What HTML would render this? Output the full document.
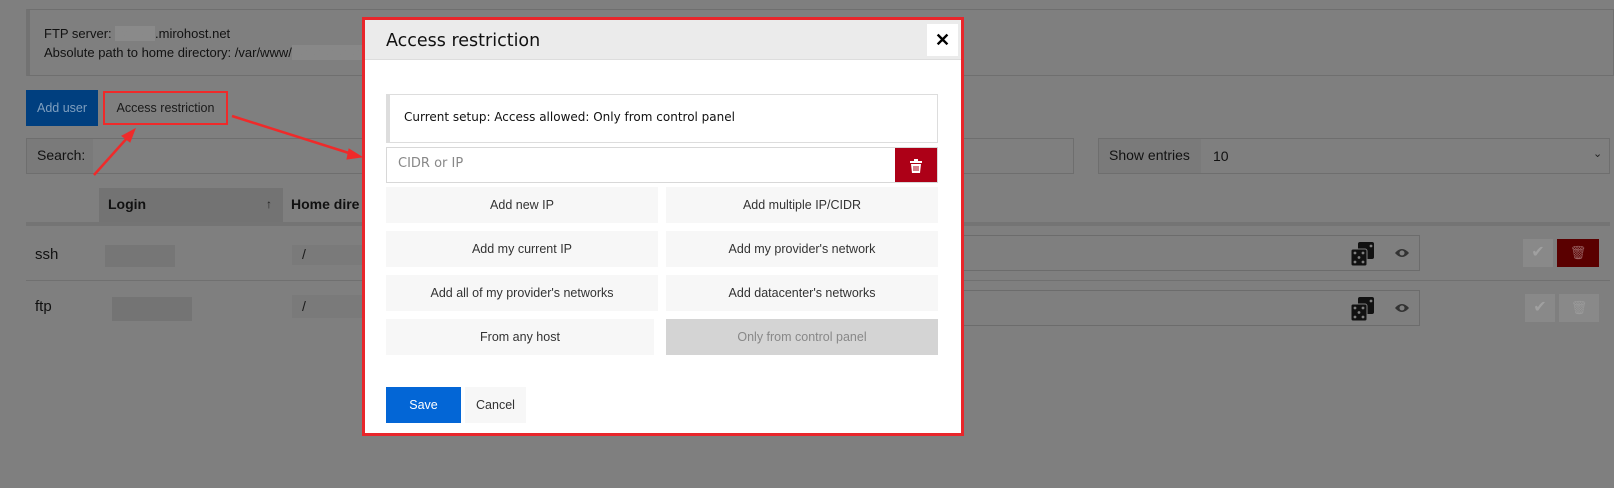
<!DOCTYPE html>
<html><head><meta charset="utf-8"><style>
*{box-sizing:border-box;margin:0;padding:0}
body{width:1614px;height:488px;position:relative;overflow:hidden;background:#7f7f7f;font-family:"Liberation Sans",sans-serif;color:#1a1a1a}
.a{position:absolute}
.btn{position:absolute;background:#f7f7f7;font-size:12.5px;color:#333;display:flex;align-items:center;justify-content:center}
</style></head><body>
<!-- background page (dimmed) -->
<div class="a" style="left:26px;top:9px;width:1588px;height:67px;border:1px solid #6f6f6f;border-left:4px solid #727272;background:#7f7f7f"></div>
<div class="a" style="left:44px;top:24px;font-size:13px;color:#121212;line-height:19px">FTP server: <span style="background:#8a8a8a;color:#8a8a8a">xx.xx.x</span>.mirohost.net<br>Absolute path to home directory: /var/www/<span style="background:#888;color:#888">xxxxxxxxxxxxx</span></div>
<div class="a" style="left:26px;top:90px;width:72px;height:36px;background:#003f7f;color:#7f9fbf;font-size:12.5px;display:flex;align-items:center;justify-content:center">Add user</div>
<div class="a" style="left:103px;top:91px;width:125px;height:34px;border:2px solid #ef2a2a;color:#1a1a1a;font-size:12.5px;display:flex;align-items:center;justify-content:center">Access restriction</div>
<div class="a" style="left:26px;top:138px;width:1048px;height:36px;border:1px solid #6e6e6e"></div>
<div class="a" style="left:27px;top:139px;width:66px;height:34px;background:#7a7a7a"></div>
<div class="a" style="left:37px;top:147px;font-size:14px;color:#111">Search:</div>
<div class="a" style="left:1098px;top:138px;width:512px;height:36px;border:1px solid #6e6e6e"></div>
<div class="a" style="left:1099px;top:139px;width:102px;height:34px;background:#7a7a7a"></div>
<div class="a" style="left:1109px;top:147px;font-size:14px;color:#111">Show entries</div>
<div class="a" style="left:1213px;top:148px;font-size:14px;color:#111">10</div>
<div class="a" style="left:1593px;top:147px;font-size:11px;color:#222">&#8964;</div>
<div class="a" style="left:99px;top:188px;width:184px;height:34px;background:#737373"></div>
<div class="a" style="left:108px;top:196px;font-size:14px;font-weight:bold;color:#111">Login</div>
<div class="a" style="left:266px;top:197px;font-size:12px;color:#222">↑</div>
<div class="a" style="left:291px;top:196px;font-size:14px;font-weight:bold;color:#111">Home dire</div>
<div class="a" style="left:26px;top:222px;width:1584px;height:4px;background:#747474"></div>
<div class="a" style="left:26px;top:280px;width:1584px;height:1px;background:#707070"></div>
<div class="a" style="left:35px;top:246px;font-size:15px;color:#111">ssh</div>
<div class="a" style="left:35px;top:298px;font-size:15px;color:#111">ftp</div>
<div class="a" style="left:105px;top:245px;width:70px;height:22px;background:#767676"></div>
<div class="a" style="left:112px;top:297px;width:80px;height:24px;background:#747474"></div>
<div class="a" style="left:292px;top:245px;width:70px;height:20px;background:#7a7a7a"></div>
<div class="a" style="left:302px;top:246px;font-size:14px">/</div>
<div class="a" style="left:292px;top:295px;width:70px;height:23px;background:#7a7a7a"></div>
<div class="a" style="left:302px;top:298px;font-size:14px">/</div>
<div class="a" style="left:960px;top:235px;width:460px;height:36px;border:1px solid #6c6c6c"></div>
<div class="a" style="left:960px;top:290px;width:460px;height:36px;border:1px solid #6c6c6c"></div>
<svg class="a" style="left:1350px;top:241px" width="28" width2="" height="26" viewBox="0 0 28 26"><rect x="8" y="1" width="16" height="17" rx="2" fill="#111"/><rect x="1" y="8" width="16" height="17" rx="2" fill="#111" stroke="#7f7f7f" stroke-width="1"/><g fill="#7f7f7f"><circle cx="5" cy="12" r="1.4"/><circle cx="13" cy="12" r="1.4"/><circle cx="9" cy="16.5" r="1.4"/><circle cx="5" cy="21" r="1.4"/><circle cx="13" cy="21" r="1.4"/><circle cx="21" cy="5" r="1.4"/></g></svg>
<svg class="a" style="left:1350px;top:296px" width="28" height="26" viewBox="0 0 28 26"><rect x="8" y="1" width="16" height="17" rx="2" fill="#111"/><rect x="1" y="8" width="16" height="17" rx="2" fill="#111" stroke="#7f7f7f" stroke-width="1"/><g fill="#7f7f7f"><circle cx="5" cy="12" r="1.4"/><circle cx="13" cy="12" r="1.4"/><circle cx="9" cy="16.5" r="1.4"/><circle cx="5" cy="21" r="1.4"/><circle cx="13" cy="21" r="1.4"/><circle cx="21" cy="5" r="1.4"/></g></svg>
<svg class="a" style="left:1394px;top:247px" width="16" height="12" viewBox="0 0 16 12"><path d="M1 6Q8 -2 15 6Q8 14 1 6Z" fill="#333"/><circle cx="8" cy="6" r="2.5" fill="#7f7f7f"/></svg>
<svg class="a" style="left:1394px;top:302px" width="16" height="12" viewBox="0 0 16 12"><path d="M1 6Q8 -2 15 6Q8 14 1 6Z" fill="#333"/><circle cx="8" cy="6" r="2.5" fill="#7f7f7f"/></svg>
<div class="a" style="left:1523px;top:239px;width:30px;height:28px;background:#898989;color:#a0a0a0;font-size:16px;text-align:center;line-height:28px">✔</div>
<div class="a" style="left:1557px;top:239px;width:42px;height:28px;background:#5a0000;color:#9a6060;font-size:13px;text-align:center;line-height:28px">🗑</div>
<div class="a" style="left:1525px;top:294px;width:30px;height:28px;background:#898989;color:#a0a0a0;font-size:16px;text-align:center;line-height:28px">✔</div>
<div class="a" style="left:1559px;top:294px;width:40px;height:28px;background:#898989;color:#9a9a9a;font-size:13px;text-align:center;line-height:28px">🗑</div>
<svg class="a" style="left:0;top:0" width="400" height="200"><g stroke="#ef2a2a" stroke-width="2.5" fill="#ef2a2a"><line x1="94" y1="175" x2="128" y2="137"/><polygon points="135,129 122,136 130,142" stroke-width="1"/><line x1="232" y1="116" x2="352" y2="154"/><polygon points="362,157 349,149 347,159" stroke-width="1"/></g></svg>
<!-- modal -->
<div class="a" style="left:362px;top:17px;width:602px;height:419px;border:3px solid #e8262b;background:#fff"></div>
<div class="a" style="left:365px;top:20px;width:596px;height:40px;background:#ebebeb;border-bottom:1px solid #ddd"></div>
<div class="a" style="left:386px;top:31px;font-size:19px;color:#111;font-family:'DejaVu Sans','Liberation Sans',sans-serif;font-size:17.5px">Access restriction</div>
<div class="a" style="left:927px;top:24px;width:31px;height:32px;background:#fff;font-size:18px;text-align:center;line-height:32px;color:#000;font-weight:bold">✕</div>
<div class="a" style="left:386px;top:94px;width:552px;height:49px;border:1px solid #ddd;border-left:4px solid #ddd"></div>
<div class="a" style="left:404px;top:110px;font-size:13px;color:#111;font-family:'DejaVu Sans','Liberation Sans',sans-serif;font-size:12px">Current setup: Access allowed: Only from control panel</div>
<div class="a" style="left:386px;top:147px;width:552px;height:36px;border:1px solid #d8d8d8"></div>
<div class="a" style="left:398px;top:156px;font-size:14px;color:#888;font-family:'DejaVu Sans','Liberation Sans',sans-serif;font-size:13px">CIDR or IP</div>
<div class="a" style="left:895px;top:148px;width:42px;height:34px;background:#ad0017;color:#fff;font-size:13px;text-align:center;line-height:34px">
<svg width="12" height="14" viewBox="0 0 12 14" style="vertical-align:middle"><rect x="0" y="2" width="12" height="2" fill="#fff"/><rect x="4" y="0" width="4" height="2" fill="#fff"/><path d="M1 5H11L10 14H2Z" fill="#fff"/><g stroke="#ad0017" stroke-width="1"><line x1="4" y1="7" x2="4" y2="12"/><line x1="6" y1="7" x2="6" y2="12"/><line x1="8" y1="7" x2="8" y2="12"/></g></svg></div>
<div class="btn" style="left:386px;top:187px;width:272px;height:36px">Add new IP</div>
<div class="btn" style="left:666px;top:187px;width:272px;height:36px">Add multiple IP/CIDR</div>
<div class="btn" style="left:386px;top:231px;width:272px;height:36px">Add my current IP</div>
<div class="btn" style="left:666px;top:231px;width:272px;height:36px">Add my provider's network</div>
<div class="btn" style="left:386px;top:275px;width:272px;height:36px">Add all of my provider's networks</div>
<div class="btn" style="left:666px;top:275px;width:272px;height:36px">Add datacenter's networks</div>
<div class="btn" style="left:386px;top:319px;width:268px;height:36px">From any host</div>
<div class="btn" style="left:666px;top:319px;width:272px;height:36px;background:#d4d4d4;color:#888">Only from control panel</div>
<div class="btn" style="left:386px;top:387px;width:75px;height:36px;background:#0366d6;color:#fff">Save</div>
<div class="btn" style="left:465px;top:387px;width:61px;height:36px">Cancel</div>
</body></html>
